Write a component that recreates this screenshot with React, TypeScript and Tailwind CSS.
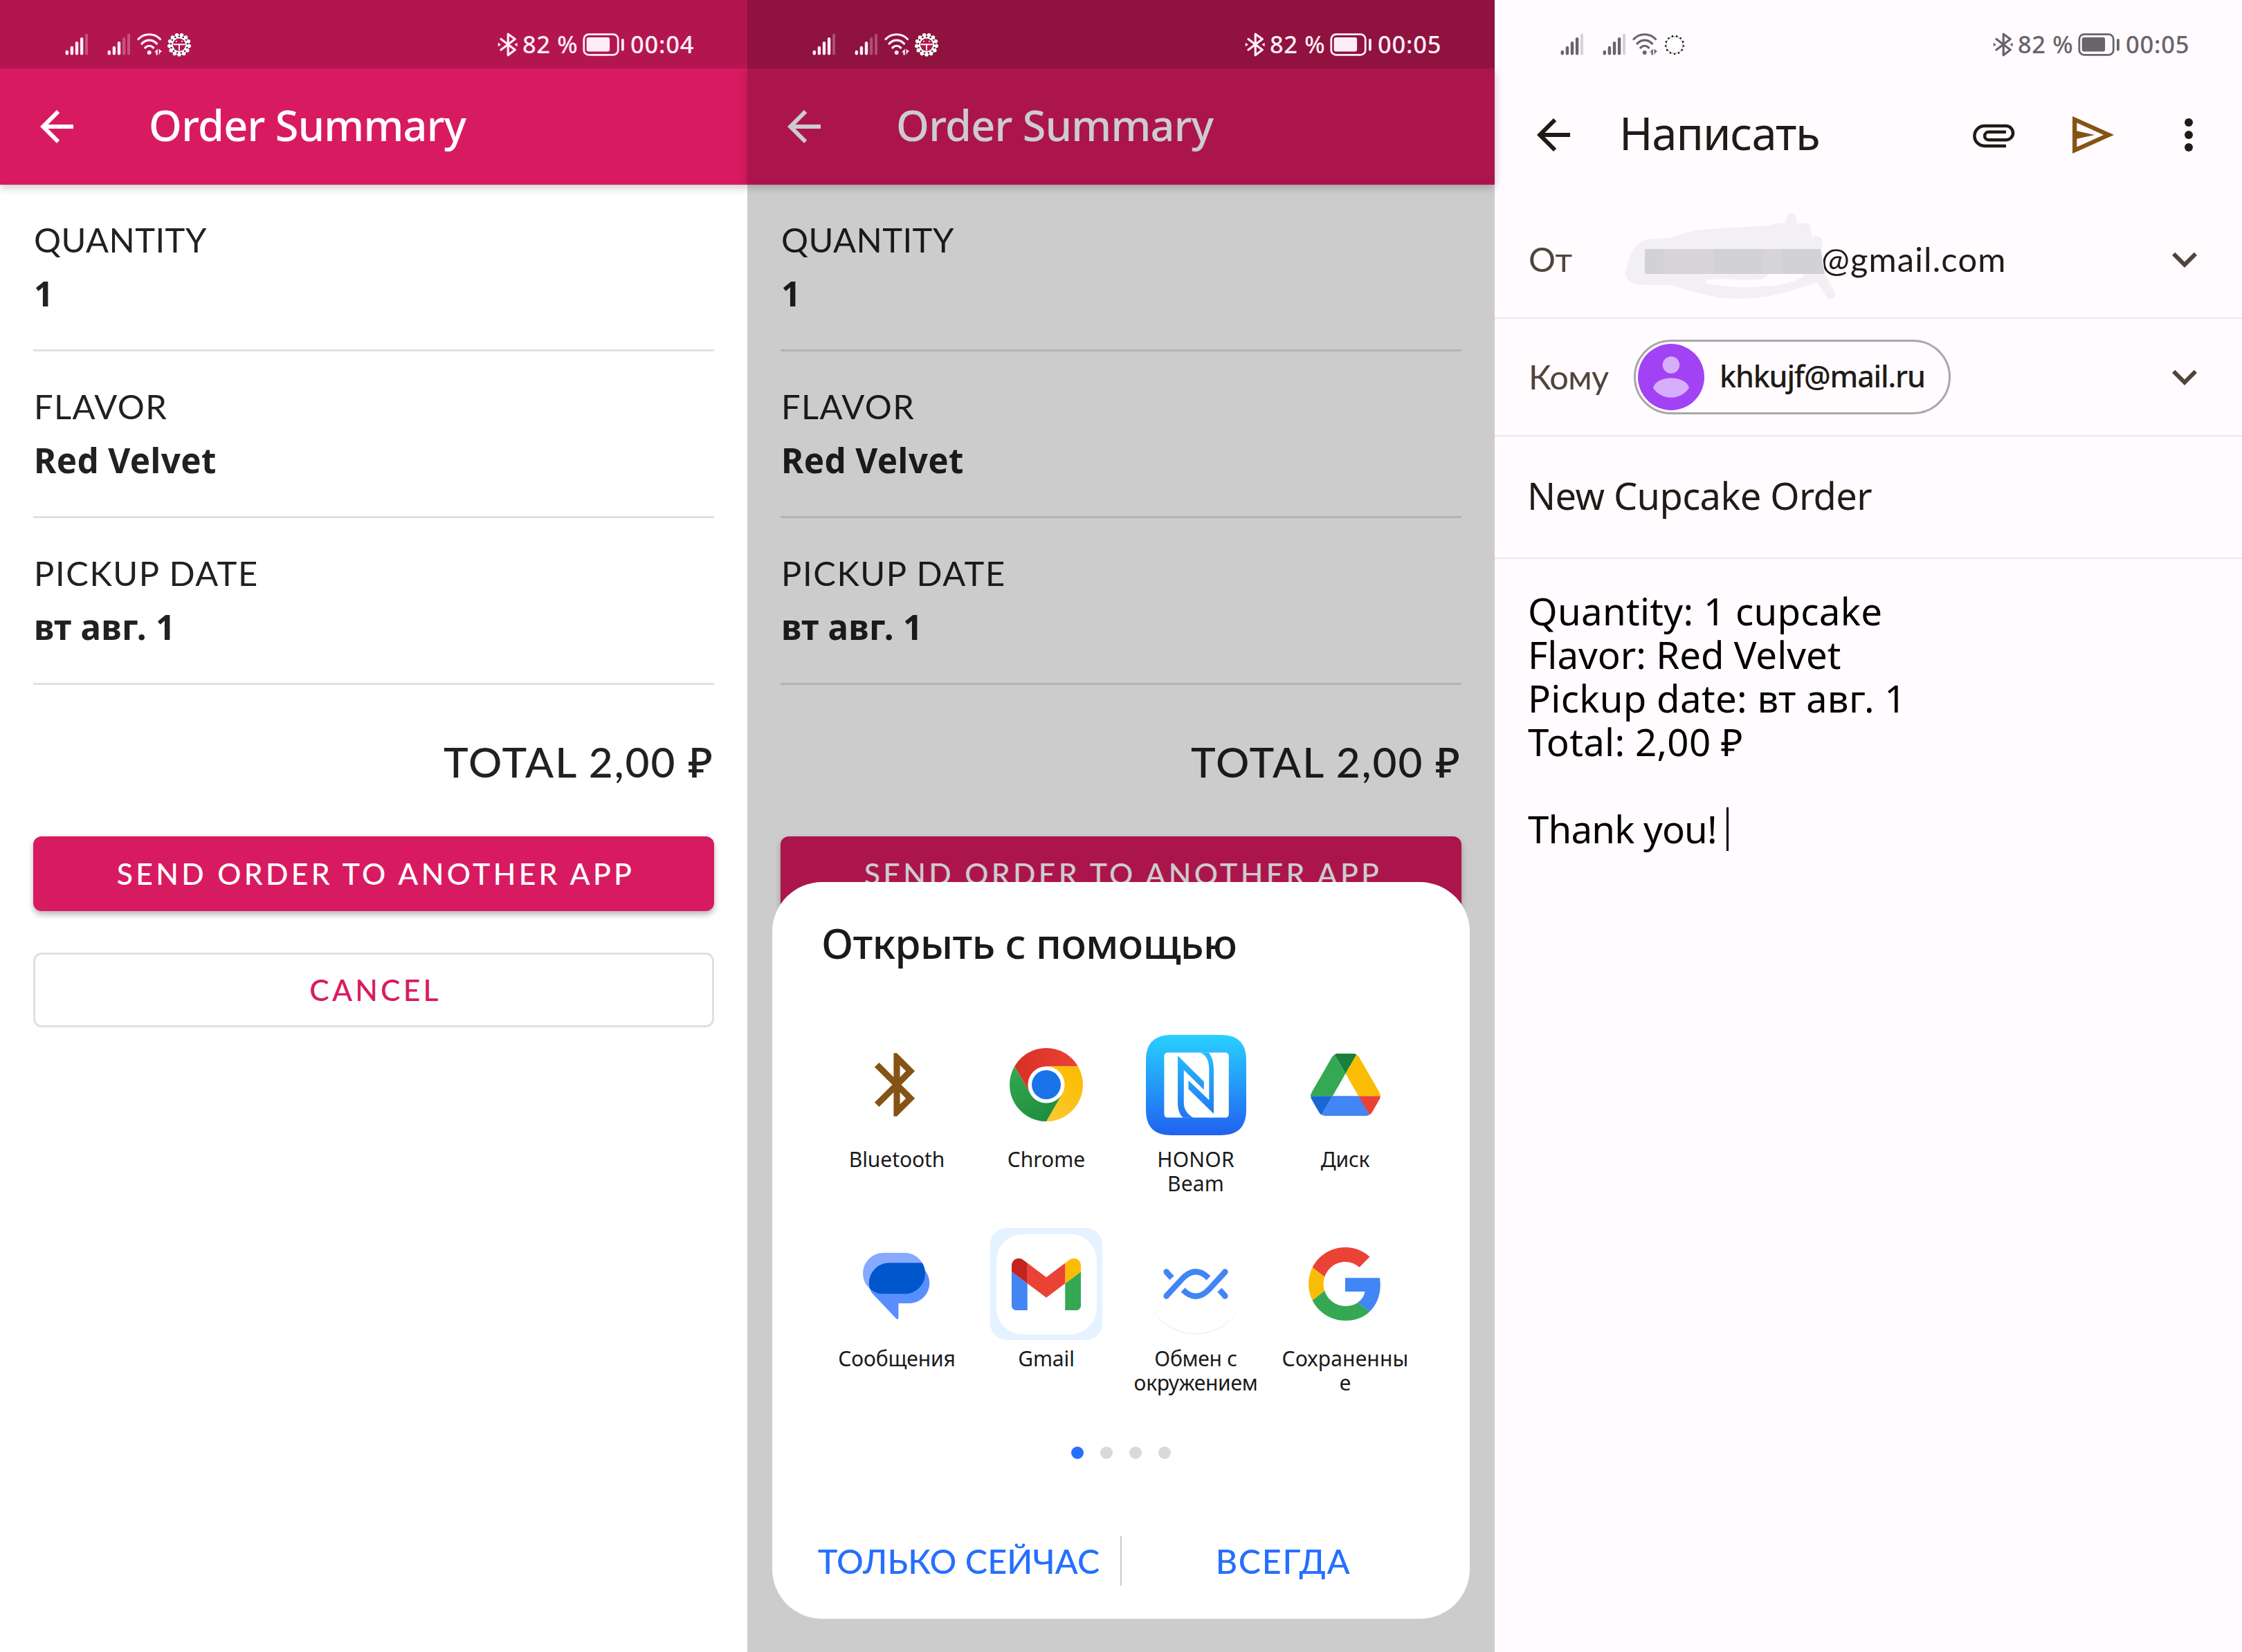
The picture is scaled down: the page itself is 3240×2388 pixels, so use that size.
import type { ReactNode } from "react";

/* ---------- icons ---------- */

function BackArrow() {
  return (
    <svg viewBox="0 0 24 24" className="size-[72px] shrink-0" fill="currentColor">
      <path d="M20 11H7.83l5.59-5.59L12 4l-8 8 8 8 1.41-1.41L7.83 13H20v-2z" />
    </svg>
  );
}

function Signal({ strength }: { strength: number }) {
  const tops = [26.7, 20.7, 14, 8, 2.7];
  return (
    <svg viewBox="0 0 33 36" className="h-[36px] w-[33px] shrink-0" fill="currentColor">
      {tops.map((y, i) => (
        <rect key={i} x={0.6 + i * 7.1} y={y} width="4.4" height={33.4 - y} rx="2.2" opacity={i < strength ? 1 : 0.28} />
      ))}
    </svg>
  );
}

function Wifi() {
  return (
    <svg viewBox="0 0 38 36" className="ml-[8px] h-[36px] w-[38px] shrink-0" fill="none">
      <g stroke="currentColor" strokeWidth="3.200" strokeLinecap="round">
        <path d="M4 10.500C12.500 1.500 27 1.500 35.500 10.500" />
        <path d="M9 17C15.500 10.500 24 10.500 30.500 17" />
        <path d="M13.800 23C17.500 19.500 22 19.500 25.700 23" />
      </g>
      <circle cx="19.700" cy="30" r="3" fill="currentColor" />
      <path d="M31.800 24.500v9h-2.400v-4h-2.400zM33.600 33.500v-9l5 4.600h-2.400z" fill="currentColor" />
    </svg>
  );
}

const TEETH = Array.from({ length: 13 }, (_, i) => {
  const a = (i / 13) * Math.PI * 2 + Math.PI / 2;
  return { cos: Math.cos(a), sin: Math.sin(a) };
});

function GearBadge({ light }: { light: boolean }) {
  return (
    <svg viewBox="0 0 36 36" className="ml-[7px] size-[36px] shrink-0">
      {light ? (
        <g>
          <circle cx="18" cy="19" r="12.200" fill="#fefefe" stroke="#8b878c" strokeWidth="0.700" />
          {TEETH.map((t, i) => (
            <circle key={i} cx={18 + t.cos * 13} cy={19 + t.sin * 13} r="1.300" fill="#111111" />
          ))}
        </g>
      ) : (
        <g>
          <circle cx="18" cy="18.700" r="14.500" fill="#ffffff" />
          {TEETH.map((t, i) => (
            <circle key={i} cx={18 + t.cos * 14.4} cy={18.7 + t.sin * 14.4} r="2.700" fill="#ffffff" />
          ))}
          {TEETH.map((t, i) => (
            <circle key={i} cx={18 - t.cos * 12.2} cy={18.7 - t.sin * 12.2} r="1.300" fill="#24302c" />
          ))}
          <circle cx="18" cy="18.700" r="9.200" fill="#b3164f" />
          <path d="M9.500 18.200h17M18 18v9" stroke="#ffffff" strokeWidth="1.900" />
          <path d="M13 13.800h2M21 13.800h2" stroke="#ffffff" strokeWidth="1.600" />
        </g>
      )}
    </svg>
  );
}

function StatusBluetooth() {
  return (
    <svg viewBox="0 0 30 36" className="h-[36px] w-[30px] shrink-0" fill="none" stroke="currentColor">
      <path d="M5 10.500L25.300 26 15.200 33.800V3.200L25.300 10.500 5 26" strokeWidth="3.200" strokeLinejoin="round" strokeLinecap="round" />
      <path d="M0.800 15.800l4.200 2.700-4.200 2.700zM28.600 15.800l-4.200 2.700 4.200 2.700z" fill="currentColor" stroke="none" />
    </svg>
  );
}

function Battery() {
  return (
    <svg viewBox="0 0 60 36" className="h-[36px] w-[60px] shrink-0">
      <rect x="1.800" y="3.600" width="49.400" height="29.800" rx="7" fill="none" stroke="currentColor" strokeWidth="2.800" />
      <rect x="5.700" y="8" width="33.400" height="20.600" rx="3" fill="currentColor" />
      <rect x="56" y="10" width="3.800" height="17.400" rx="1.600" fill="currentColor" />
    </svg>
  );
}

function Chevron() {
  return (
    <svg viewBox="0 0 24 24" className="ml-auto size-[72px] shrink-0" fill="#4f4539">
      <path d="M16.590 8.590L12 13.170 7.410 8.590 6 10l6 6 6-6z" />
    </svg>
  );
}

function BluetoothApp() {
  return (
    <svg viewBox="0 0 24 24" className="size-[110px]" fill="#855314">
      <path d="M17.710 7.710L12 2h-1v7.590L6.410 5 5 6.410 10.590 12 5 17.590 6.410 19 11 14.410V22h1l5.710-5.710-4.300-4.290 4.300-4.290zM13 5.830l1.880 1.880L13 9.590V5.830zm1.880 10.460L13 18.170v-3.760l1.880 1.880z" />
    </svg>
  );
}

function ChromeApp() {
  return (
    <svg viewBox="0 0 48 48" className="size-[106px]">
      <defs>
        <linearGradient id="chR" x1="0" y1="0" x2="1" y2="0"><stop stopColor="#d93025" /><stop offset="1" stopColor="#ea4335" /></linearGradient>
        <linearGradient id="chY" x1="0" y1="1" x2="0.600" y2="0"><stop stopColor="#fcc934" /><stop offset="1" stopColor="#fbbc04" /></linearGradient>
        <linearGradient id="chG" x1="0.700" y1="1" x2="0" y2="0"><stop stopColor="#1e8e3e" /><stop offset="1" stopColor="#34a853" /></linearGradient>
      </defs>
      <circle cx="24" cy="24" r="12" fill="#ffffff" />
      <path d="M24 12H44.781A23.994 23.994 0 0 0 3.216 12.002L13.608 30 13.617 29.998A11.985 11.985 0 0 1 24 12Z" fill="url(#chR)" />
      <path d="M34.391 30.003L24.001 48A23.994 23.994 0 0 0 44.780 12.003H23.999L23.997 12.013A11.985 11.985 0 0 1 34.391 30.003Z" fill="url(#chY)" />
      <path d="M13.609 30.003L3.218 12.006A23.994 23.994 0 0 0 24.003 48L34.393 30.003 34.387 29.996A11.985 11.985 0 0 1 13.609 30.003Z" fill="url(#chG)" />
      <circle cx="24" cy="24" r="9.500" fill="#1a73e8" />
    </svg>
  );
}

function HonorBeamApp() {
  return (
    <svg viewBox="0 0 145 145" className="size-[145px]">
      <defs>
        <linearGradient id="beam" gradientUnits="userSpaceOnUse" x1="0" y1="0" x2="0" y2="145"><stop stopColor="#29d0ff" /><stop offset="1" stopColor="#2062f0" /></linearGradient>
      </defs>
      <path d="M37 0H108C133 0 145 12 145 37V108C145 133 133 145 108 145H37C12 145 0 133 0 108V37C0 12 12 0 37 0Z" fill="url(#beam)" />
      <rect x="26.400" y="25.600" width="93.400" height="94" rx="5" fill="#ffffff" />
      <path d="M46 30L83.800 67.500V79.300L54.800 50.700V98C54.800 108 60 115 69 119.800H54C48 115 46 106 46 98Z" fill="url(#beam)" />
      <path d="M61.500 65.700L91.300 94.300V52C91.300 38 89 30 78 25.400H91C96 33 98 40 98 52V114L61.500 78.200Z" fill="url(#beam)" />
    </svg>
  );
}

function DriveApp() {
  return (
    <svg viewBox="0 0 87.300 78" className="h-[90px] w-[101px]">
      <path fill="#1967d2" d="m6.600 66.850 3.850 6.650c.8 1.400 1.950 2.500 3.300 3.300l13.750-23.800h-27.500c0 1.550.4 3.100 1.200 4.500z" />
      <path fill="#34a853" d="m43.650 25-13.750-23.800c-1.350.8-2.500 1.900-3.300 3.300l-25.400 44a9.060 9.060 0 0 0 -1.200 4.500h27.500z" />
      <path fill="#ea4335" d="m73.550 76.800c1.350-.8 2.500-1.900 3.300-3.300l1.600-2.750 7.650-13.250c.8-1.400 1.200-2.950 1.200-4.500h-27.502l5.852 11.500z" />
      <path fill="#188038" d="m43.650 25 13.750-23.800c-1.350-.8-2.900-1.200-4.500-1.200h-18.500c-1.600 0-3.150.45-4.500 1.200z" />
      <path fill="#4285f4" d="m59.800 53h-32.300l-13.750 23.800c1.350.8 2.900 1.200 4.500 1.200h50.800c1.600 0 3.150-.45 4.500-1.200z" />
      <path fill="#fbbc04" d="m73.400 26.500-12.700-22c-.8-1.400-1.950-2.500-3.300-3.300l-13.750 23.800 16.150 28h27.450c0-1.550-.4-3.100-1.200-4.500z" />
    </svg>
  );
}

function MessagesApp() {
  return (
    <svg viewBox="0 0 98 96" className="mt-[6px] h-[96px] w-[98px]">
      <defs>
        <clipPath id="bubble"><rect width="90" height="59.500" rx="29.700" /></clipPath>
      </defs>
      <rect width="90" height="59.500" rx="29.700" fill="#87a9ff" />
      <path d="M38 14.500H68.700A29.300 29.300 0 0 1 68.700 73H51.400V93.500Q51 97.500 48 95L13 58Q8.800 51 8.800 44A29.300 29.300 0 0 1 38 14.500Z" fill="#598eff" />
      <path clipPath="url(#bubble)" d="M38 14.500H98V59.500H14Q8.800 51 8.800 44A29.300 29.300 0 0 1 38 14.500Z" fill="#0057cc" />
    </svg>
  );
}

function GmailApp() {
  return (
    <div className="flex size-[162px] items-center justify-center rounded-[24px] bg-[#e5f2ff]">
      <div className="flex size-[145px] items-center justify-center rounded-[38px] bg-white">
        <svg viewBox="52 42 88 66" className="h-[75px] w-[100px]">
          <path fill="#4285f4" d="M58 108h14V74L52 59v43c0 3.320 2.690 6 6 6" />
          <path fill="#34a853" d="M120 108h14c3.320 0 6-2.690 6-6V59l-20 15" />
          <path fill="#fbbc04" d="M120 48v26l20-15v-8c0-7.420-8.470-11.650-14.400-7.200" />
          <path fill="#ea4335" d="M72 74V48l24 18 24-18v26L96 92" />
          <path fill="#c5221f" d="M52 51v8l20 15V48l-5.600-4.200c-5.940-4.450-14.400-.22-14.400 7.200" />
        </svg>
      </div>
    </div>
  );
}

function NearbyApp() {
  return (
    <div className="flex size-[146px] items-center justify-center rounded-full border-b-2 border-[#f1f1f3]">
      <svg viewBox="0 0 94 44" className="mt-[2px] h-[44px] w-[94px]" fill="none" stroke="#4285f4" strokeWidth="8.400">
        <path d="M4.300 4.300L12.500 13.300" />
        <circle cx="4.600" cy="4.400" r="4.200" fill="#4285f4" stroke="none" />
        <path d="M4.300 39.700L27.500 14.500Q46.500-5.500 65.500 13.500" />
        <circle cx="4.600" cy="39.600" r="4.200" fill="#4285f4" stroke="none" />
        <path d="M89.700 4.300L66.500 29.500Q47.500 49.500 28.500 30.500" />
        <circle cx="89.400" cy="4.400" r="4.200" fill="#4285f4" stroke="none" />
        <path d="M89.700 39.700L81.500 30.700" />
        <circle cx="89.400" cy="39.600" r="4.200" fill="#4285f4" stroke="none" />
      </svg>
    </div>
  );
}

function GoogleApp() {
  return (
    <svg viewBox="0 0 48 48" className="size-[106px]">
      <path fill="#ea4335" d="M24 9.500c3.540 0 6.710 1.220 9.210 3.600l6.850-6.850C35.900 2.380 30.470 0 24 0 14.620 0 6.510 5.380 2.560 13.220l7.980 6.190C12.430 13.720 17.740 9.500 24 9.500z" />
      <path fill="#4285f4" d="M46.980 24.550c0-1.570-.15-3.090-.38-4.550H24v9.020h12.940c-.58 2.960-2.260 5.480-4.780 7.180l7.730 6c4.510-4.180 7.090-10.360 7.090-17.650z" />
      <path fill="#fbbc05" d="M10.530 28.590c-.48-1.450-.76-2.990-.76-4.590s.27-3.140.76-4.590l-7.980-6.190C.92 16.460 0 20.120 0 24c0 3.880.92 7.540 2.560 10.780l7.970-6.190z" />
      <path fill="#34a853" d="M24 48c6.480 0 11.930-2.130 15.890-5.810l-7.730-6c-2.150 1.450-4.920 2.300-8.160 2.300-6.260 0-11.570-4.220-13.470-9.910l-7.980 6.190C6.510 42.620 14.620 48 24 48z" />
    </svg>
  );
}

/* ---------- shared pieces ---------- */

function StatusBar({ time, signal2, light = false, className }: { time: string; signal2: number; light?: boolean; className: string }) {
  return (
    <div className={`relative z-10 flex h-[99px] shrink-0 items-start pt-[46px] text-[34.500px] leading-[36px] font-medium ${className}`}>
      <Signal strength={4} />
      <div className="w-[28px]" />
      <Signal strength={signal2} />
      <Wifi />
      <GearBadge light={light} />
      <div className="ml-auto flex w-[361px] items-start">
        <StatusBluetooth />
        <span className="ml-[6px] w-[87px] whitespace-nowrap tracking-[0.600px]">82 %</span>
        <Battery />
        <span className="ml-[9px] whitespace-nowrap tracking-[0.800px]">{time}</span>
      </div>
    </div>
  );
}

function Field({ label, labelClass, value, valueClass }: { label: string; labelClass: string; value: string; valueClass: string }) {
  return (
    <div className="border-b-[3px] border-[#e0e0e0] pt-[41px] pb-[43px] pl-[1px]">
      <div className={`font-['Lato',sans-serif] text-[48.800px] leading-[77px] ${labelClass}`}>{label}</div>
      <div className={`text-[49.300px] leading-[77px] font-bold ${valueClass}`}>{value}</div>
    </div>
  );
}

function OrderSummary() {
  return (
    <>
      <div className="flex h-[168px] shrink-0 items-center bg-[#d81b60] pl-[46px] text-white shadow-[0_4px_12px_rgba(0,0,0,0.22)]">
        <BackArrow />
        <h1 className="mb-[4px] ml-[97px] text-[61.100px] leading-[72px] font-medium tracking-[-0.730px]">Order Summary</h1>
      </div>
      <div className="flex flex-col px-[48px] text-[#212121]">
        <Field label="QUANTITY" labelClass="tracking-[0.450px]" value="1" valueClass="" />
        <Field label="FLAVOR" labelClass="tracking-[1.400px]" value="Red Velvet" valueClass="tracking-[0.390px]" />
        <Field label="PICKUP DATE" labelClass="tracking-[1.610px]" value="вт авг. 1" valueClass="tracking-[0.320px]" />
        <div className="mt-[75px] text-right font-['Lato','Noto_Sans',sans-serif] text-[60.300px] leading-[72px] font-medium tracking-[2px]">TOTAL 2,00 ₽</div>
        <button className="mt-[72px] h-[108px] rounded-[12px] bg-[#d81b60] pl-[6px] font-['Lato',sans-serif] text-[42.700px] font-medium tracking-[4.320px] text-white shadow-[0_5px_8px_rgba(0,0,0,0.28)]">
          SEND ORDER TO ANOTHER APP
        </button>
        <button className="mt-[60px] h-[108px] rounded-[12px] border-[3px] border-[#e0e0e0] pl-[5px] font-['Lato',sans-serif] text-[42.700px] font-medium tracking-[4.200px] text-[#d81b60]">
          CANCEL
        </button>
      </div>
    </>
  );
}

function AppCell({ icon, lines, tracking }: { icon: ReactNode; lines: string[]; tracking: string }) {
  return (
    <div className="flex h-[288px] flex-col items-center">
      <div className="flex h-[162px] items-center justify-center">{icon}</div>
      <div className={`mt-[9px] text-center text-[30px] leading-[35px] ${tracking}`}>
        {lines.map((l) => (
          <div key={l} className="whitespace-nowrap">{l}</div>
        ))}
      </div>
    </div>
  );
}

function ChooserSheet() {
  return (
    <div className="absolute top-[1275px] left-[36px] z-20 flex h-[1065px] w-[1008px] flex-col rounded-[72px] bg-white text-[#1a1a1a]">
      <h2 className="mt-[48px] pl-[71px] text-[60.400px] leading-[80px] font-medium tracking-[-0.780px]">Открыть с помощью</h2>
      <div className="mt-[84px] grid grid-cols-4 px-[72px]">
        <AppCell icon={<BluetoothApp />} lines={["Bluetooth"]} tracking="tracking-[-0.080px]" />
        <AppCell icon={<ChromeApp />} lines={["Chrome"]} tracking="tracking-normal" />
        <AppCell icon={<HonorBeamApp />} lines={["HONOR", "Beam"]} tracking="tracking-[0.200px]" />
        <AppCell icon={<DriveApp />} lines={["Диск"]} tracking="tracking-[-0.200px]" />
        <AppCell icon={<MessagesApp />} lines={["Сообщения"]} tracking="tracking-[-0.100px]" />
        <AppCell icon={<GmailApp />} lines={["Gmail"]} tracking="tracking-[-0.100px]" />
        <AppCell icon={<NearbyApp />} lines={["Обмен с", "окружением"]} tracking="tracking-[-0.290px]" />
        <AppCell icon={<GoogleApp />} lines={["Сохраненны", "е"]} tracking="tracking-[0.170px]" />
      </div>
      <div className="mt-[28px] flex justify-center gap-[24px]">
        <span className="size-[18px] rounded-full bg-[#256fff]" />
        <span className="size-[18px] rounded-full bg-[#d9d9d9]" />
        <span className="size-[18px] rounded-full bg-[#d9d9d9]" />
        <span className="size-[18px] rounded-full bg-[#d9d9d9]" />
      </div>
      <div className="mt-[111px] flex h-[72px] items-center px-[36px] font-['Lato',sans-serif] text-[48.400px] font-medium text-[#256fff]">
        <button className="flex-1 whitespace-nowrap tracking-[0.140px]">ТОЛЬКО СЕЙЧАС</button>
        <span className="h-[72px] w-[2px] bg-[#cccccc]" />
        <button className="flex-1 tracking-[1.720px]">ВСЕГДА</button>
      </div>
    </div>
  );
}

function RedactedName() {
  return (
    <div className="relative h-[168px] w-[271px] shrink-0">
      <svg viewBox="180 291 320 168" className="absolute top-0 -left-[21px] h-[168px] w-[320px]">
        <path
          d="M189 393Q190 384 193 377Q202 350 220 346Q240 345 258 343Q276 335 296 332Q360 328 395 326Q402 323 420 322L423 311Q429 304 435 311L437 323H455L459 343Q466 338 472 344Q476 349 473 360L477 396L492 423Q493 433 486 432Q481 433 478 427L465 407Q455 413 441 416Q405 429 372 431Q345 433 324 430Q290 424 255 412H217Q200 412 193 405Q188 400 189 393Z"
          fill="#f3f0f4"
        />
        <path d="M304 406Q316 402 345 404Q370 406 388 403L398 395H446Q449 398 440 403Q420 412 390 414Q350 417 320 412Q305 410 304 406Z" fill="#fffbff" />
        <path d="M217 360H471L474 382L477 396H217Z" fill="#d2d1d3" />
        <path d="M244 360h72v36h-72zM388 360h28v36h-28z" fill="#d6d4d6" />
      </svg>
    </div>
  );
}

function ComposeMail() {
  return (
    <>
      <div className="flex h-[192px] shrink-0 items-center pr-[41px] pl-[49px] text-[#201b16]">
        <BackArrow />
        <h1 className="mb-[6px] ml-[59px] text-[65.300px] tracking-[-1.150px]">Написать</h1>
        <div className="ml-auto flex gap-[69px]">
          <svg viewBox="0 0 24 24" className="size-[72px]" fill="none" stroke="currentColor" strokeWidth="1.500">
            <path d="M18 17.300H7.600a4.800 4.800 0 0 1 0-9.600H18a3.350 3.350 0 0 1 0 6.700H9.600a1.900 1.900 0 0 1 0-3.800H18" />
          </svg>
          <svg viewBox="0 0 24 24" className="size-[72px]" fill="#855314">
            <path fillRule="evenodd" d="M3 3L23 12 3 21ZM5.100 6.200V10.100L13.700 12 5.100 13.900V17.800L18 12Z" />
          </svg>
          <svg viewBox="0 0 24 24" className="size-[72px]" fill="currentColor">
            <circle cx="12" cy="6" r="2" />
            <circle cx="12" cy="12" r="2" />
            <circle cx="12" cy="18" r="2" />
          </svg>
        </div>
      </div>
      <div className="flex h-[170px] items-center border-b-2 border-[#e9e7ea] pr-[47px] pl-[49px] font-['Lato',sans-serif] text-[48.800px] text-[#201b16]">
        <span className="w-[152px] tracking-[-0.600px] text-[#4f4539]">От</span>
        <RedactedName />
        <span className="tracking-[1.150px]">@gmail.com</span>
        <Chevron />
      </div>
      <div className="flex h-[170px] items-center border-b-2 border-[#e9e7ea] pr-[47px] pl-[49px] text-[#201b16]">
        <span className="w-[152px] font-['Lato',sans-serif] text-[48.800px] tracking-[-0.610px] text-[#4f4539]">Кому</span>
        <div className="flex h-[108px] w-[458px] items-center rounded-full border-[3px] border-[#a9a7a9] pl-[3px]">
          <svg viewBox="0 0 96 96" className="size-[96px] shrink-0">
            <circle cx="48" cy="48" r="48" fill="#a142f4" />
            <circle cx="48" cy="30.500" r="12.200" fill="#d7aefb" />
            <path d="M22 64C24 54 37 49.500 48 49.500S72 54 74 64C68 72.500 59 77.700 48 77.700S28 72.500 22 64Z" fill="#d7aefb" />
          </svg>
          <span className="mb-[2px] ml-[22px] text-[43px] font-medium tracking-[-1.150px]">khkujf@mail.ru</span>
        </div>
        <Chevron />
      </div>
      <div className="flex h-[177px] items-center border-b-2 border-[#e9e7ea] pb-[3px] pl-[47px] text-[54.200px] tracking-[-0.600px] text-[#201b16]">New Cupcake Order</div>
      <div className="pt-[44px] pl-[48px] text-[54.600px] leading-[63px] tracking-[0.300px] text-black">
        <p>Quantity: 1 cupcake</p>
        <p className="tracking-normal">Flavor: Red Velvet</p>
        <p>Pickup date: вт авг. 1</p>
        <p>Total: 2,00 ₽</p>
        <div className="mt-[63px] flex items-center">
          <p className="tracking-[-0.820px]">Thank you!</p>
          <span className="ml-[14px] h-[63px] w-[3px] bg-black" />
        </div>
      </div>
    </>
  );
}

export default function App() {
  return (
    <div className="flex h-[2388px] w-[3240px] overflow-hidden bg-white font-['Noto_Sans',sans-serif]">
      <section className="flex w-[1080px] flex-col">
        <StatusBar time="00:04" signal2={3} className="bg-[#b3164f] pl-[94px] text-[#fdeef5]" />
        <OrderSummary />
      </section>
      <section className="relative flex w-[1080px] flex-col">
        <StatusBar time="00:05" signal2={3} className="bg-[#8f123f] pl-[94px] text-[#fdeef5]" />
        <OrderSummary />
        <div className="absolute inset-0 bg-black/20" />
        <ChooserSheet />
      </section>
      <section className="flex w-[1080px] flex-col bg-[#fffbff]">
        <StatusBar time="00:05" signal2={4} light className="-mr-[1px] pl-[95px] text-[#67656a]" />
        <ComposeMail />
      </section>
    </div>
  );
}
